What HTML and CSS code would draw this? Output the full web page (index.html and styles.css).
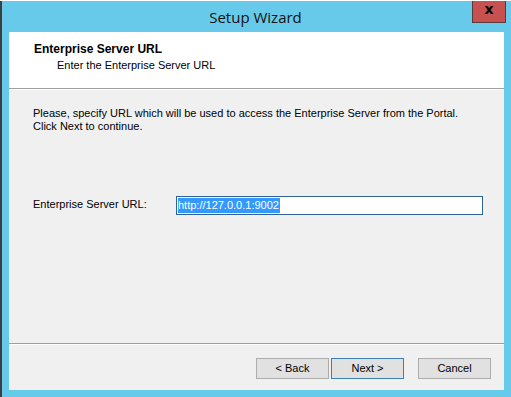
FILE: index.html
```html
<!DOCTYPE html>
<html>
<head>
<meta charset="utf-8">
<link rel="stylesheet" href="styles.css">
</head>
<body>
<div class="window">
  <div class="titlebar">
    <span class="title">Setup Wizard</span>
    <div class="close">x</div>
  </div>
  <div class="client">
    <div class="header">
      <div class="h-title">Enterprise Server URL</div>
      <div class="h-sub">Enter the Enterprise Server URL</div>
    </div>
    <div class="body">
      <p class="intro">Please, specify URL which will be used to access the Enterprise Server from the Portal.<br>Click Next to continue.</p>
      <div class="field">
        <span class="label">Enterprise Server URL:</span>
        <div class="input"><span class="sel">http://127.0.0.1:9002</span><span class="caret"></span></div>
      </div>
    </div>
    <div class="footer">
      <div class="btn">&lt; Back</div>
      <div class="btn default">Next &gt;</div>
      <div class="btn cancel">Cancel</div>
    </div>
  </div>
</div>
</body>
</html>
```
FILE: styles.css
```css
html, body {
  margin: 0;
  padding: 0;
  background: #ffffff;
}
body {
  font-family: "Liberation Sans", Arial, sans-serif;
  font-size: 11px;
  color: #000;
}
.window {
  width: 509px;
  height: 396px;
  margin-top: 1px;
  background: #68caeb;
  border-left: 2px solid #3b3f42;
  display: flex;
  flex-direction: column;
}
.titlebar {
  height: 31px;
  position: relative;
  display: flex;
  justify-content: center;
  align-items: center;
}
.title {
  font-family: "Open Sans", "Liberation Sans", sans-serif;
  font-size: 15px;
  color: #111;
  margin-left: -2px;
}
.close {
  position: absolute;
  left: 470px;
  top: 0;
  width: 32px;
  height: 21px;
  background: #c75050;
  border: 1px solid #5a3a3a;
  border-top: none;
  color: #000;
  font-family: "DejaVu Sans", sans-serif;
  font-weight: bold;
  font-size: 14px;
  line-height: 17px;
  text-align: center;
}
.client {
  margin-left: 7px;
  width: 495px;
  height: 358px;
  background: #f0f0f0;
  display: flex;
  flex-direction: column;
}
.header {
  height: 57px;
  background: #fff;
  border-bottom: 1px solid #a0a0a0;
  box-shadow: 0 1px 0 #fff;
  padding-left: 25px;
  box-sizing: border-box;
  padding-top: 10px;
}
.h-title {
  font-weight: bold;
  font-size: 12px;
  line-height: 15px;
}
.h-sub {
  padding-left: 23px;
  line-height: 14px;
  margin-top: 1px;
}
.body {
  flex: 1;
  padding: 18px 0 0 24px;
}
.intro {
  margin: 0;
  line-height: 13px;
}
.field {
  display: flex;
  align-items: center;
  margin-top: 63px;
}
.label {
  width: 143px;
  margin-top: -4px;
}
.input {
  width: 307px;
  height: 19px;
  box-sizing: border-box;
  border: 1px solid #2d6495;
  background: #fff;
  display: flex;
  align-items: center;
  padding-left: 1px;
}
.sel {
  background: #3399ff;
  color: #fff;
  font-size: 11px;
  line-height: 15px;
  height: 15px;
}
.caret {
  width: 1px;
  height: 15px;
  background: #e07020;
}
.footer {
  height: 47px;
  border-top: 1px solid #a0a0a0;
  box-shadow: inset 0 1px 0 #fff;
  box-sizing: border-box;
  display: flex;
  padding: 14px 0 0 247px;
}
.btn {
  width: 73px;
  height: 21px;
  box-sizing: border-box;
  border: 1px solid #adadad;
  background: #e1e1e1;
  text-align: center;
  line-height: 19px;
  font-size: 11px;
}
.btn.default {
  border-color: #3c7fb1;
  margin-left: 2px;
}
.btn.cancel {
  margin-left: 14px;
}
```
